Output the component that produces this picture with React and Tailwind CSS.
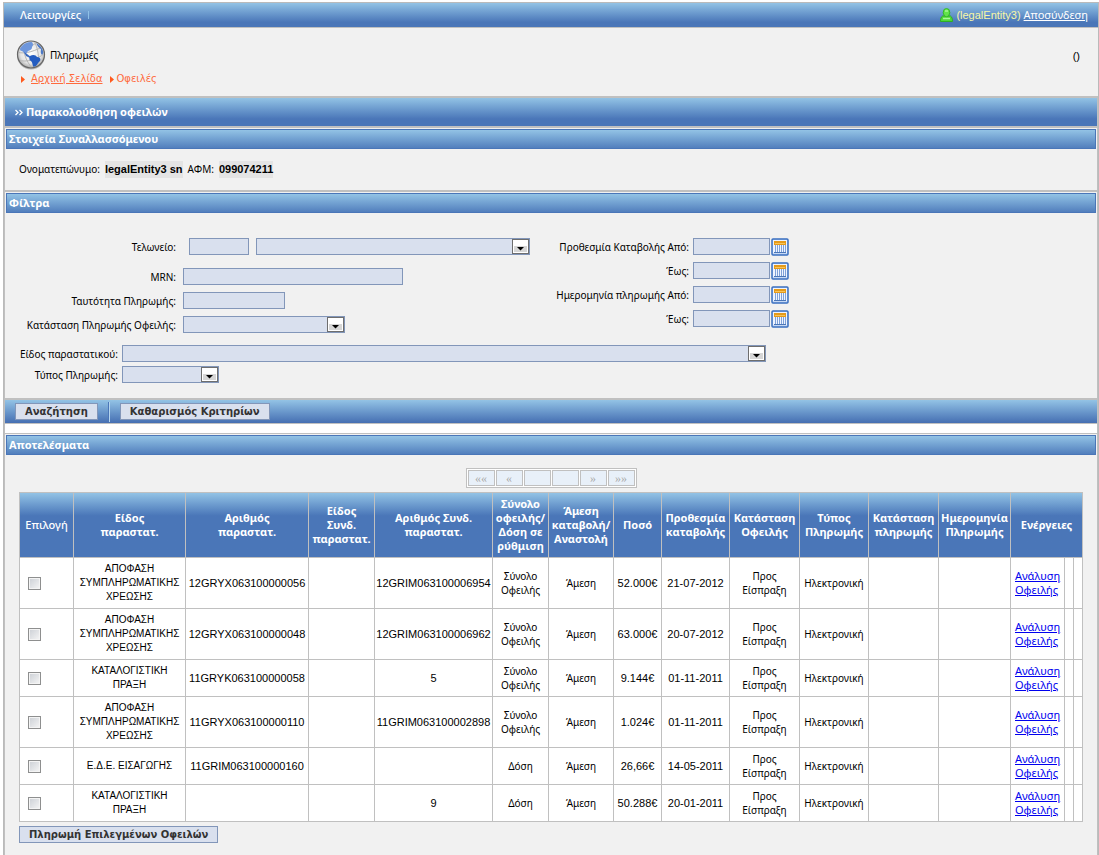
import React, { useState } from "react";

const columns = [
  { label: "Επιλογή", light: true },
  { label: "Είδος\nπαραστατ." },
  { label: "Αριθμός\nπαραστατ." },
  { label: "Είδος\nΣυνδ.\nπαραστατ." },
  { label: "Αριθμός Συνδ.\nπαραστατ." },
  { label: "Σύνολο\nοφειλής/\nΔόση σε\nρύθμιση" },
  { label: "Άμεση\nκαταβολή/\nΑναστολή" },
  { label: "Ποσό" },
  { label: "Προθεσμία\nκαταβολής" },
  { label: "Κατάσταση\nΟφειλής" },
  { label: "Τύπος\nΠληρωμής" },
  { label: "Κατάσταση\nπληρωμής" },
  { label: "Ημερομηνία\nΠληρωμής" },
  { label: "Ενέργειες", span: 3 },
];

const colWidths = [54, 112, 123, 66, 118, 56, 65, 48, 68, 70, 69, 70, 72, 54, 9, 9];

const debts = [
  { kind: "ΑΠΟΦΑΣΗ ΣΥΜΠΛΗΡΩΜΑΤΙΚΗΣ ΧΡΕΩΣΗΣ", number: "12GRYX063100000056", related: "12GRIM063100006954", part: "Σύνολο Οφειλής", amount: "52.000€", due: "21-07-2012" },
  { kind: "ΑΠΟΦΑΣΗ ΣΥΜΠΛΗΡΩΜΑΤΙΚΗΣ ΧΡΕΩΣΗΣ", number: "12GRYX063100000048", related: "12GRIM063100006962", part: "Σύνολο Οφειλής", amount: "63.000€", due: "20-07-2012" },
  { kind: "ΚΑΤΑΛΟΓΙΣΤΙΚΗ ΠΡΑΞΗ", number: "11GRYK063100000058", related: "5", part: "Σύνολο Οφειλής", amount: "9.144€", due: "01-11-2011" },
  { kind: "ΑΠΟΦΑΣΗ ΣΥΜΠΛΗΡΩΜΑΤΙΚΗΣ ΧΡΕΩΣΗΣ", number: "11GRYX063100000110", related: "11GRIM063100002898", part: "Σύνολο Οφειλής", amount: "1.024€", due: "01-11-2011" },
  { kind: "Ε.Δ.Ε. ΕΙΣΑΓΩΓΗΣ", number: "11GRIM063100000160", related: "", part: "Δόση", amount: "26,66€", due: "14-05-2011" },
  { kind: "ΚΑΤΑΛΟΓΙΣΤΙΚΗ ΠΡΑΞΗ", number: "", related: "9", part: "Δόση", amount: "50.288€", due: "20-01-2011" },
];

const GlobeIcon = () => (
  <svg width="30" height="30" viewBox="0 0 30 30" aria-hidden="true">
    <defs>
      <radialGradient id="sea" cx="0.5" cy="0.45" r="0.55">
        <stop offset="0" stopColor="#ffffff" />
        <stop offset="0.7" stopColor="#e4e4e4" />
        <stop offset="1" stopColor="#a8a8a8" />
      </radialGradient>
      <clipPath id="disc">
        <circle cx="15" cy="14.5" r="12.5" />
      </clipPath>
    </defs>
    <circle cx="15" cy="15.5" r="14" fill="#b5b5b5" />
    <circle cx="15" cy="14.5" r="13.5" fill="url(#sea)" stroke="#666" strokeWidth="1.2" />
    <g clipPath="url(#disc)">
      <path d="M1 12C9 15 21 10 28 6M2 20c9 3 19-1 26-6M8 1c-2 10 2 20 8 27M18 1c4 7 6 17 3 27M3 7c8 2 14-1 19-6" fill="none" stroke="#b5b5b5" />
      <path d="M4 8c0-4 4-7 9-7 4 0 5 4 3 6 0 3-2 3-4 4l-2 3c-2 0-2-2-4-3-2 0-2-1-2-3z" fill="#6d96dc" />
      <path d="M8 12l3 2 4 3-1 1-4-2z" fill="#3566bd" />
      <path d="M14 16c3-2 6-1 7 1 3 0 4 2 3 4-2 2-3 3-4 6l-2 1c-2-3-1-5-3-7-2-1-2-3-1-5z" fill="#245cc0" />
      <path d="M20 2c5 1 8 5 8 10l-2 3c-2-2-1-4-1-6-2-1-4-3-5-7z" fill="#4b78c6" />
    </g>
  </svg>
);

const UserIcon = () => (
  <svg width="13" height="14" viewBox="0 0 13 14" aria-hidden="true">
    <path d="M2.5 8h8c1.500 1 2 3 2 5.500H0.500C0.500 11 1 9 2.500 8z" fill="#4fd93a" stroke="#2fae22" />
    <path d="M4 1.500Q6.500 -0.500 9 1.500Q11 5 8.500 8Q6.500 9.500 4.500 8Q2 5 4 1.500z" fill="#62e34a" stroke="#35b828" />
    <path d="M5 3h3M3 10.500h7" stroke="#a9f797" strokeWidth="1.300" />
  </svg>
);

const CalendarIcon = () => (
  <svg width="18" height="18" viewBox="0 0 18 18" aria-hidden="true">
    <rect x="1" y="1" width="16" height="16" rx="1" fill="#c6d8f4" stroke="#3a6fc0" strokeWidth="1.500" />
    <rect x="2" y="2" width="14" height="13" fill="#eef4ff" />
    <rect x="3" y="3" width="12" height="4" fill="#e59a1a" />
    <path d="M4 5.500h10" stroke="#f8c458" />
    <path d="M4.500 7v7M6.500 7v7M8.500 7v7M10.500 7v7M12.500 7v7M14.500 7v7" stroke="#7fa1d8" />
    <path d="M3 14.500h12" stroke="#4a76b8" />
  </svg>
);

const Arrow = () => (
  <svg width="4" height="7" viewBox="0 0 4 7" aria-hidden="true">
    <path d="M0 0l4 3.500L0 7z" fill="#ff5a1e" />
  </svg>
);

const TextField = ({ id, className, ...rest }) => (
  <input id={id} type="text" className={`h-[17px] border border-[#8296b9] bg-[#d9e0ee] px-1 text-[10px] ${className}`} {...rest} />
);

const SelectField = ({ id, className, ...rest }) => (
  <div className={`relative ${className}`}>
    <select id={id} className="block h-[17px] w-full appearance-none border border-[#8296b9] bg-[#d9e0ee] px-1 text-[10px]" {...rest}>
      <option value=""></option>
    </select>
    <svg className="pointer-events-none absolute top-px right-px" width="17" height="15" viewBox="0 0 17 15" aria-hidden="true">
      <rect x="0.500" y="0.500" width="16" height="14" fill="#fff" stroke="#6e6e6e" />
      <rect x="2" y="7" width="13" height="6" fill="#d6d6d6" />
      <path d="M5 8h7L8.500 11.500z" fill="#000" />
    </svg>
  </div>
);

const DateRow = ({ id, label }) => (
  <div className="flex h-6 items-start gap-1">
    <label htmlFor={id} className="w-[145px] text-right leading-[18px]">{label}</label>
    <div className="flex gap-px">
      <TextField id={id} className="w-[77px]" />
      <button type="button" aria-label="Ημερολόγιο">
        <CalendarIcon />
      </button>
    </div>
  </div>
);

const GroupTitle = ({ children }) => (
  <h2 className="mx-px mt-px h-5 border border-[#4a76b8] bg-linear-to-b from-[#93c3e5] to-[#527fbd] px-[2px] text-[11px] leading-[18px] font-bold text-white">
    {children}
  </h2>
);

const FormButton = ({ className = "", children }) => (
  <button
    type="button"
    className={`h-[17px] border border-[#8296b9] bg-[#d9e0ee] px-[9px] font-['DejaVu_Sans',sans-serif] text-[10px] leading-[15px] font-bold text-[#333] ${className}`}
  >
    {children}
  </button>
);

const TopBar = () => (
  <div className="flex h-[25px] items-center justify-between border-b border-[#c0c0c0] bg-linear-to-b from-[#93c3e5] to-[#4a76b8] to-80% pr-[10px] pl-4 text-white">
    <nav className="flex items-center gap-[7px] text-[11px] font-medium">
      <a href="#menu">Λειτουργίες</a>
      <span className="h-2 w-px bg-[#8fc0e6]" />
    </nav>
    <div className="flex items-center gap-[3px]">
      <UserIcon />
      <span className="font-['Liberation_Sans',sans-serif] text-[11px] text-[#f7f7a6]">(legalEntity3)</span>
      <a href="#logout" className="text-[11px] underline">Αποσύνδεση</a>
    </div>
  </div>
);

const PageHeader = () => (
  <header className="flex items-start justify-between pt-3 pr-[18px] pb-[10px] pl-3">
    <div>
      <div className="flex items-center gap-1">
        <GlobeIcon />
        <span>Πληρωμές</span>
      </div>
      <div className="mt-[2px] flex items-center pl-[5px] font-['DejaVu_Sans',sans-serif] text-[10px] leading-[14px] text-[#ff6a3c]">
        <Arrow />
        <a href="#home" className="mr-[7px] ml-[6px] underline">Αρχική Σελίδα</a>
        <Arrow />
        <span className="ml-[3px]">Οφειλές</span>
      </div>
    </div>
    <span className="mt-2 font-['Liberation_Sans',sans-serif] text-[11px]">()</span>
  </header>
);

const Filters = () => (
  <form className="px-[14px] pt-[25px] pb-[14px] leading-[18px]">
    <div className="flex">
      <div className="w-[525px]">
        <div className="flex h-[30px] items-start">
          <label htmlFor="customs" className="w-[157px] text-right">Τελωνείο:</label>
          <TextField id="customs" className="ml-[13px] w-[60px]" />
          <SelectField id="customs-name" aria-label="Τελωνείο" className="ml-[7px] w-[274px]" />
        </div>
        <div className="flex h-6 items-start gap-[7px]">
          <label htmlFor="mrn" className="w-[157px] text-right">MRN:</label>
          <TextField id="mrn" className="w-[220px]" />
        </div>
        <div className="flex h-6 items-start gap-[7px]">
          <label htmlFor="payment-id" className="w-[157px] text-right">Ταυτότητα Πληρωμής:</label>
          <TextField id="payment-id" className="w-[102px]" />
        </div>
        <div className="flex h-[29px] items-start gap-[7px]">
          <label htmlFor="payment-state" className="w-[157px] text-right">Κατάσταση Πληρωμής Οφειλής:</label>
          <SelectField id="payment-state" className="w-[162px]" />
        </div>
      </div>
      <div>
        <DateRow id="due-from" label="Προθεσμία Καταβολής Από:" />
        <DateRow id="due-to" label="Έως:" />
        <DateRow id="paid-from" label="Ημερομηνία πληρωμής Από:" />
        <DateRow id="paid-to" label="Έως:" />
      </div>
    </div>
    <div className="flex h-[21px] items-start gap-1">
      <label htmlFor="doc-kind" className="w-[99px] text-right">Είδος παραστατικού:</label>
      <SelectField id="doc-kind" className="w-[644px]" />
    </div>
    <div className="flex items-start gap-1">
      <label htmlFor="payment-kind" className="w-[99px] text-right">Τύπος Πληρωμής:</label>
      <SelectField id="payment-kind" className="w-[97px]" />
    </div>
  </form>
);

const Pager = () => (
  <div className="mx-auto flex w-fit gap-px border border-[#c0c0c0] bg-white p-px">
    {["««", "«", "", "", "»", "»»"].map((mark, index) => (
      <button
        key={index}
        type="button"
        disabled
        aria-label={`Σελίδα ${index + 1}`}
        className="h-4 w-[27px] border border-[#c0c0c0] bg-[#e8f0f9] font-['Liberation_Serif',serif] text-[12px] leading-[14px] text-[#a8a8a8]"
      >
        {mark}
      </button>
    ))}
  </div>
);

const DebtsTable = () => {
  const [selected, setSelected] = useState([]);

  const toggle = (index) => {
    setSelected((prev) =>
      prev.includes(index) ? prev.filter((i) => i !== index) : [...prev, index]
    );
  };

  return (
    <table className="mt-1 w-full table-fixed border-collapse bg-white text-center leading-[14px] [&_td]:border [&_td]:border-[#c0c0c0] [&_th]:border [&_th]:border-[#c0c0c0]">
      <colgroup>
        {colWidths.map((width, index) => (
          <col key={index} style={{ width }} />
        ))}
      </colgroup>
      <thead>
        <tr className="h-[65px] bg-linear-to-b from-[#93c3e5] to-[#4a76b8] to-35% text-[11px] whitespace-pre-line text-white">
          {columns.map((col) => (
            <th key={col.label} colSpan={col.span || 1} className={col.light ? "font-medium" : "font-bold"}>
              {col.label}
            </th>
          ))}
        </tr>
      </thead>
      <tbody>
        {debts.map((debt, index) => (
          <tr key={index} className={debt.kind.startsWith("ΑΠΟΦΑΣΗ") ? "h-[51px]" : "h-[37px]"}>
            <td className="pl-2 text-left">
              <input
                type="checkbox"
                aria-label={`Επιλογή ${index + 1}`}
                checked={selected.includes(index)}
                onChange={() => toggle(index)}
                className="block size-[13px] appearance-none border border-[#8e8f8f] bg-linear-to-br from-[#cbcfd5] to-[#f6f6f6] shadow-[inset_0_0_0_1px_#f4f4f4] checked:bg-[#4a76b8]"
              />
            </td>
            <td className="font-['Liberation_Sans',sans-serif]">{debt.kind}</td>
            <td className="font-['Liberation_Sans',sans-serif] text-[11px]">{debt.number}</td>
            <td></td>
            <td className="font-['Liberation_Sans',sans-serif] text-[11px]">{debt.related}</td>
            <td>{debt.part}</td>
            <td>Άμεση</td>
            <td className="font-['Liberation_Sans',sans-serif] text-[11px]">{debt.amount}</td>
            <td className="font-['Liberation_Sans',sans-serif] text-[11px]">{debt.due}</td>
            <td>Προς Είσπραξη</td>
            <td>Ηλεκτρονική</td>
            <td></td>
            <td></td>
            <td className="pl-1 text-left">
              <a href="#analysis" className="text-[11px] text-[#0000ee] underline">Ανάλυση Οφειλής</a>
            </td>
            <td></td>
            <td></td>
          </tr>
        ))}
      </tbody>
    </table>
  );
};

export default function App() {
  return (
    <div className="flex min-h-screen flex-col bg-white pt-[2px] pl-[3px] font-['Noto_Sans',sans-serif] text-[10px] text-black">
      <div className="flex grow flex-col border-x border-t border-[#bababa] bg-[#f1f1f1]">
        <TopBar />
        <PageHeader />

        <main className="grow border-x border-[#c0c0c0]">
          <h1 className="flex h-8 items-center gap-[3px] border-y-2 border-[#c0c0c0] bg-linear-to-b from-[#93c3e5] to-[#4a76b8] to-75% pl-[10px] text-[11px] font-bold text-white">
            <svg width="8" height="8" viewBox="0 0 8 8" aria-hidden="true">
              <path d="M0.500 2L3 4.500 0.500 7M4.500 2L7 4.500 4.500 7" fill="none" stroke="#fff" strokeWidth="1.300" />
            </svg>
            Παρακολούθηση οφειλών
          </h1>

          <section className="border-b-2 border-[#c0c0c0]">
            <GroupTitle>Στοιχεία Συναλλασσόμενου</GroupTitle>
            <div className="flex h-[41px] items-center gap-[5px] pl-[14px]">
              <span>Ονοματεπώνυμο:</span>
              <span className="bg-[#e4e4e4] font-['Liberation_Sans',sans-serif] text-[11px] font-bold">legalEntity3 sn</span>
              <span>ΑΦΜ:</span>
              <span className="bg-[#e4e4e4] font-['Liberation_Sans',sans-serif] text-[11px] font-bold">099074211</span>
            </div>
          </section>

          <section>
            <GroupTitle>Φίλτρα</GroupTitle>
            <Filters />
            <div className="flex h-[26px] items-center border-t-2 border-b border-[#c0c0c0] bg-linear-to-b from-[#93c3e5] to-[#466fb2] pl-[10px]">
              <FormButton>Αναζήτηση</FormButton>
              <span className="mx-[10px] h-5 w-[2px] border-l border-[#4a76b8] bg-[#b5d5ee]" />
              <FormButton>Καθαρισμός Κριτηρίων</FormButton>
            </div>
          </section>

          <div className="h-[9px] bg-white" />

          <section className="border-t border-[#c0c0c0]">
            <GroupTitle>Αποτελέσματα</GroupTitle>
            <div className="px-[14px] pt-[13px] pb-3">
              <Pager />
              <DebtsTable />
              <FormButton className="mt-1">Πληρωμή Επιλεγμένων Οφειλών</FormButton>
            </div>
          </section>
        </main>
      </div>
    </div>
  );
}
